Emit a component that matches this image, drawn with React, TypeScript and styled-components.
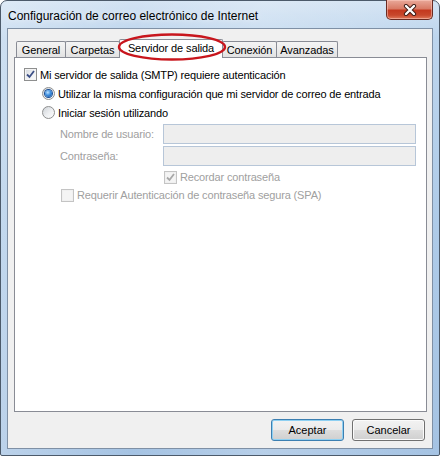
import React from 'react';
import styled, { createGlobalStyle } from 'styled-components';

const GlobalStyle = createGlobalStyle`
  html, body { margin: 0; padding: 0; background: #ffffff; }
  body { font-family: "Liberation Sans", Arial, sans-serif; }
`;

const Window = styled.div`
  position: relative;
  box-sizing: border-box;
  width: 440px;
  height: 456px;
  display: flex;
  flex-direction: column;
  padding: 0 6px 6px 6px;
  border: 1px solid #4c5a6a;
  border-radius: 7px 7px 2px 2px;
  background: linear-gradient(90deg, rgba(255,255,255,0.25), rgba(255,255,255,0) 30%, rgba(255,255,255,0.2) 60%, rgba(255,255,255,0) 100%),
    linear-gradient(180deg, #d3e3f3 0%, #bdd5ed 8%, #aecbe8 50%, #a5c3e3 100%);
`;

const TitleBar = styled.div`
  height: 27px;
  display: flex;
  align-items: flex-start;
`;

const Title = styled.div`
  flex: 1;
  padding: 8px 0 0 1px;
  font-family: "Liberation Sans", Arial, sans-serif;
  font-size: 12px;
  color: #000;
  text-shadow: 0 0 6px rgba(255, 255, 255, 0.9);
`;

const CloseButton = styled.div`
  box-sizing: border-box;
  width: 47px;
  height: 20px;
  margin-top: -1px;
  display: flex;
  align-items: center;
  justify-content: center;
  border: 1px solid #6a2b22;
  border-top: none;
  border-radius: 0 0 5px 5px;
  background: linear-gradient(180deg, #e9a99a 0%, #d97b66 45%, #c4391f 55%, #c8482c 80%, #e07a5c 100%);
  box-shadow: inset 0 0 0 1px rgba(255, 210, 200, 0.5);
`;

const Client = styled.div`
  flex: 1;
  display: flex;
  flex-direction: column;
  padding: 0 5px 0 6px;
  background: #f0f0f0;
  border: 1px solid #7f90a5;
`;

const TabStrip = styled.div`
  height: 18px;
  margin-top: 10px;
  display: flex;
  align-items: flex-end;
  padding-left: 2px;
`;

const Tab = styled.div<{ $w: number; $active?: boolean }>`
  position: relative;
  box-sizing: border-box;
  width: ${(p) => p.$w}px;
  height: ${(p) => (p.$active ? 19 : 16)}px;
  margin-left: -1px;
  margin-bottom: ${(p) => (p.$active ? -1 : 0)}px;
  z-index: ${(p) => (p.$active ? 1 : 0)};
  &:first-child { margin-left: 0; }
  display: flex;
  align-items: ${(p) => (p.$active ? 'flex-start' : 'center')};
  padding-top: ${(p) => (p.$active ? 2 : 0)}px;
  justify-content: center;
  border: 1px solid #898c95;
  border-bottom: none;
  border-radius: 2px 2px 0 0;
  background: ${(p) => (p.$active ? '#ffffff' : 'linear-gradient(180deg, #f4f4f4 0%, #ececec 50%, #e2e2e2 100%)')};
  font-size: 11px;
  letter-spacing: -0.1px;
  color: #000;
`;

const Panel = styled.div`
  box-sizing: border-box;
  height: 355px;
  display: flex;
  flex-direction: column;
  padding: 7px 10px 0 9px;
  background: #ffffff;
  border: 1px solid #898c95;
`;

const Row = styled.div<{ $indent?: number; $h?: number; $mt?: number }>`
  display: flex;
  align-items: center;
  height: ${(p) => p.$h ?? 19}px;
  margin-top: ${(p) => p.$mt ?? 0}px;
  padding-left: ${(p) => p.$indent ?? 0}px;
  gap: 3px;
`;

const Label = styled.span<{ $disabled?: boolean }>`
  font-size: 11px;
  letter-spacing: -0.15px;
  color: ${(p) => (p.$disabled ? '#a0a0a0' : '#000000')};
  white-space: nowrap;
`;

const FieldLabel = styled(Label)`
  width: 100px;
  flex: none;
`;

const TextBox = styled.div`
  flex: 1;
  box-sizing: border-box;
  height: 20px;
  border: 1px solid #b7c6d8;
  background: #eeeeee;
`;

const Box = styled.span<{ $disabled?: boolean }>`
  box-sizing: border-box;
  flex: none;
  width: 13px;
  height: 13px;
  display: flex;
  align-items: center;
  justify-content: center;
  border: 1px solid ${(p) => (p.$disabled ? '#c4c4c4' : '#8e8f8f')};
  background: ${(p) =>
    p.$disabled
      ? '#f4f4f4'
      : 'linear-gradient(135deg, #d3d7dc 0%, #eef0f2 50%, #fbfbfb 100%)'};
  box-shadow: inset 0 0 0 1px ${(p) => (p.$disabled ? '#f0f0f0' : '#f4f4f4')};
`;

const RadioBox = styled.span`
  box-sizing: border-box;
  flex: none;
  width: 13px;
  height: 13px;
  border-radius: 50%;
  display: flex;
  align-items: center;
  justify-content: center;
  border: 1px solid #8e8f8f;
  background: linear-gradient(135deg, #cfd3d8 0%, #eef0f2 55%, #fdfdfd 100%);
`;

const RadioDot = styled.span`
  width: 7px;
  height: 7px;
  border-radius: 50%;
  background: radial-gradient(circle at 40% 35%, #bfe3ff 0%, #3d8fe0 45%, #11478f 100%);
  box-shadow: 0 0 0 1px #1b4f95;
`;

const ButtonRow = styled.div`
  display: flex;
  justify-content: flex-end;
  gap: 8px;
  margin-top: 7px;
  padding-right: 2px;
`;

const Button = styled.button<{ $primary?: boolean }>`
  box-sizing: border-box;
  width: 73px;
  height: 22px;
  padding: 0;
  font-family: "Liberation Sans", Arial, sans-serif;
  font-size: 11px;
  color: #000;
  border-radius: 3px;
  border: 1px solid ${(p) => (p.$primary ? '#3c7fb1' : '#707070')};
  background: linear-gradient(180deg, #f2f2f2 0%, #ebebeb 48%, #dddddd 52%, #cfcfcf 100%);
  box-shadow: inset 0 0 0 1px ${(p) => (p.$primary ? '#8ed0f2' : '#fbfbfb')};
`;

const Annotation = styled.svg`
  position: absolute;
  left: 115px;
  top: 30px;
  pointer-events: none;
  z-index: 5;
`;

function CheckBox({ checked, disabled }: { checked?: boolean; disabled?: boolean }) {
  return (
    <Box $disabled={disabled}>
      {checked && (
        <svg width="9" height="9" viewBox="0 0 9 9">
          <path
            d="M1 4.5 L3.5 7 L8 1"
            fill="none"
            stroke={disabled ? '#a8a8a8' : '#3c4f86'}
            strokeWidth="1.8"
          />
        </svg>
      )}
    </Box>
  );
}

function Radio({ checked }: { checked?: boolean }) {
  return <RadioBox>{checked && <RadioDot />}</RadioBox>;
}

export default function App() {
  return (
    <>
      <GlobalStyle />
      <Window>
        <TitleBar>
          <Title>Configuración de correo electrónico de Internet</Title>
          <CloseButton>
            <svg width="14" height="12" viewBox="0 0 14 12">
              <path d="M3 2 L11 10 M11 2 L3 10" stroke="#3b1a14" strokeWidth="4.2" strokeLinecap="round" />
              <path d="M3 2 L11 10 M11 2 L3 10" stroke="#ffffff" strokeWidth="2.4" strokeLinecap="round" />
            </svg>
          </CloseButton>
        </TitleBar>
        <Client>
          <TabStrip>
            <Tab $w={50}>General</Tab>
            <Tab $w={55}>Carpetas</Tab>
            <Tab $w={104} $active>Servidor de salida</Tab>
            <Tab $w={55}>Conexión</Tab>
            <Tab $w={62}>Avanzadas</Tab>
          </TabStrip>
          <Panel>
            <Row>
              <CheckBox checked />
              <Label>Mi servidor de salida (SMTP) requiere autenticación</Label>
            </Row>
            <Row $indent={18}>
              <Radio checked />
              <Label>Utilizar la misma configuración que mi servidor de correo de entrada</Label>
            </Row>
            <Row $indent={18}>
              <Radio />
              <Label>Iniciar sesión utilizando</Label>
            </Row>
            <Row $indent={36} $h={20} $mt={2}>
              <FieldLabel $disabled>Nombre de usuario:</FieldLabel>
              <TextBox />
            </Row>
            <Row $indent={36} $h={20} $mt={2}>
              <FieldLabel $disabled>Contraseña:</FieldLabel>
              <TextBox />
            </Row>
            <Row $indent={140} $h={18} $mt={2}>
              <CheckBox checked disabled />
              <Label $disabled>Recordar contraseña</Label>
            </Row>
            <Row $indent={37} $h={18}>
              <CheckBox disabled />
              <Label $disabled>Requerir Autenticación de contraseña segura (SPA)</Label>
            </Row>
          </Panel>
          <ButtonRow>
            <Button $primary>Aceptar</Button>
            <Button>Cancelar</Button>
          </ButtonRow>
        </Client>
        <Annotation width="114" height="32" viewBox="0 0 114 32">
          <ellipse cx="56" cy="16" rx="53" ry="12.5" fill="none" stroke="#c8161d" strokeWidth="2.4" />
        </Annotation>
      </Window>
    </>
  );
}
